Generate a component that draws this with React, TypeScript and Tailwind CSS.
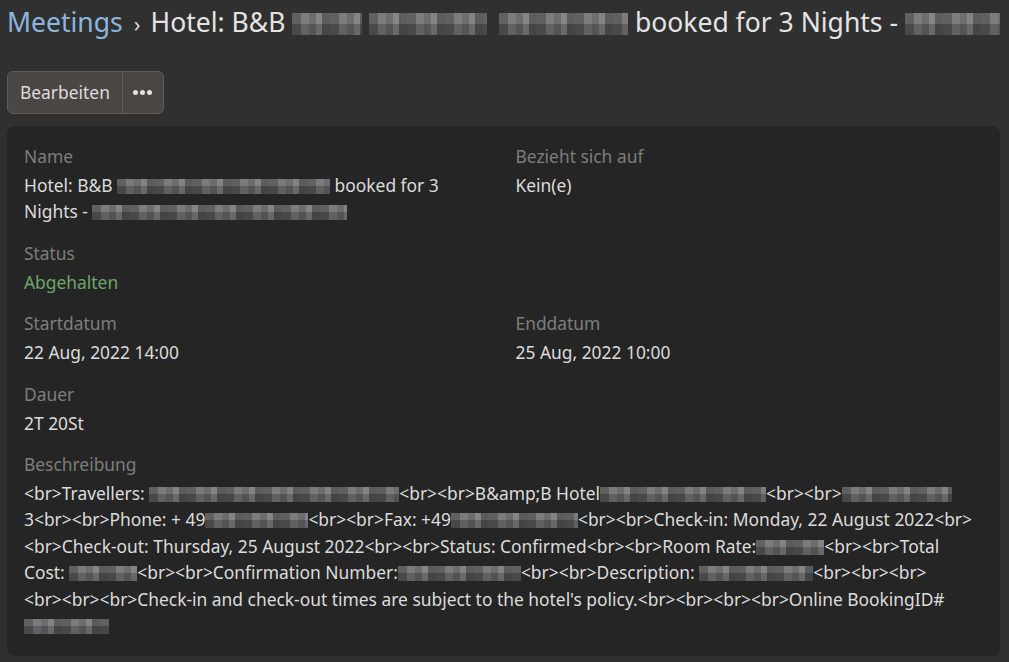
import { ReactNode } from 'react';

const Blur = ({ className }: { className: string }) => (
  <span
    className={`inline-block h-[15px] align-[-2px] bg-[linear-gradient(to_bottom,rgba(255,255,255,0.06)_50%,rgba(0,0,0,0.18)_50%),repeating-linear-gradient(90deg,#5d5d5d_0_9px,#7e7e7e_9px_17px,#6a6d70_17px_24px,#8a8886_24px_30px,#55585a_30px_38px)] opacity-90 ${className}`}
  />
);

const Field = ({ label, children }: { label: string; children: ReactNode }) => (
  <div className="flex flex-col gap-[3px]">
    <div className="text-[#7d7d7d] leading-[26px]">{label}</div>
    <div className="text-[#dcdcdc] leading-[26.4px]">{children}</div>
  </div>
);

const App = () => {
  return (
    <div className="min-h-[662px] bg-[#303030] pl-[7px] pr-[9px] pb-[7px] font-['Noto_Sans',sans-serif] text-[17.4px]">
      <div className="flex items-center h-[46px] whitespace-nowrap overflow-hidden text-[26.5px] text-[#e4e4e4]">
        <span className="text-[#8cb6de]">Meetings</span>
        <span className="ml-[11px] mr-[10px] text-[22px] text-[#d8d8d8]">›</span>
        <span>
          Hotel: B&amp;B <Blur className="w-[70px] h-[22px] align-[-3px]" /> <Blur className="w-[118px] h-[22px] align-[-3px]" />{' '}
          <Blur className="w-[129px] h-[22px] align-[-3px] ml-[5px]" /> booked for 3 Nights - <Blur className="w-[100px] h-[22px] align-[-3px]" />
        </span>
      </div>

      <div className="flex mt-[25px] w-max rounded-md border border-[#5f5b59] bg-[#4a4644] text-[#dedbd9]">
        <button className="h-[41px] px-[12px]">Bearbeiten</button>
        <button className="h-[41px] w-[41px] border-l border-[#5f5b59] flex items-center justify-center gap-[2px]">
          <span className="w-[5px] h-[5px] rounded-full bg-[#e6e2df]" />
          <span className="w-[5px] h-[5px] rounded-full bg-[#e6e2df]" />
          <span className="w-[5px] h-[5px] rounded-full bg-[#e6e2df]" />
        </button>
      </div>

      <div className="mt-[12px] rounded-lg bg-[#252525] px-[17px] pt-[17px] pb-[18px] flex flex-col gap-[15px]">
        <div className="grid grid-cols-2 gap-x-[24px] gap-y-[15px]">
          <div className="flex flex-col gap-[15px]">
            <Field label="Name">
              Hotel: B&amp;B <Blur className="w-[213px]" /> booked for 3 Nights - <Blur className="w-[255px]" />
            </Field>
            <Field label="Status">
              <span className="text-[#6ca66a]">Abgehalten</span>
            </Field>
          </div>
          <div>
            <Field label="Bezieht sich auf">Kein(e)</Field>
          </div>
          <Field label="Startdatum">22 Aug, 2022 14:00</Field>
          <Field label="Enddatum">25 Aug, 2022 10:00</Field>
          <Field label="Dauer">2T 20St</Field>
        </div>
        <Field label="Beschreibung">
          <div className="whitespace-nowrap">
            {'<br>Travellers: '}
            <Blur className="w-[250px]" />
            {'<br><br>B&amp;B Hotel'}
            <Blur className="w-[166px]" />
            {'<br><br>'}
            <Blur className="w-[110px]" />
          </div>
          <div className="whitespace-nowrap">
            {'3<br><br>Phone: + 49'}
            <Blur className="w-[103px]" />
            {'<br><br>Fax: +49'}
            <Blur className="w-[127px]" />
            {'<br><br>Check-in: Monday, 22 August 2022<br>'}
          </div>
          <div className="whitespace-nowrap">
            {'<br>Check-out: Thursday, 25 August 2022<br><br>Status: Confirmed<br><br>Room Rate:'}
            <Blur className="w-[68px]" />
            {'<br><br>Total'}
          </div>
          <div className="whitespace-nowrap">
            {'Cost: '}
            <Blur className="w-[68px]" />
            {'<br><br>Confirmation Number:'}
            <Blur className="w-[123px]" />
            {'<br><br>Description: '}
            <Blur className="w-[114px]" />
            {'<br><br><br>'}
          </div>
          <div className="whitespace-nowrap">
            {"<br><br><br>Check-in and check-out times are subject to the hotel's policy.<br><br><br><br>Online BookingID#"}
          </div>
          <div>
            <Blur className="w-[85px]" />
          </div>
        </Field>
      </div>
    </div>
  );
};

export default App;
